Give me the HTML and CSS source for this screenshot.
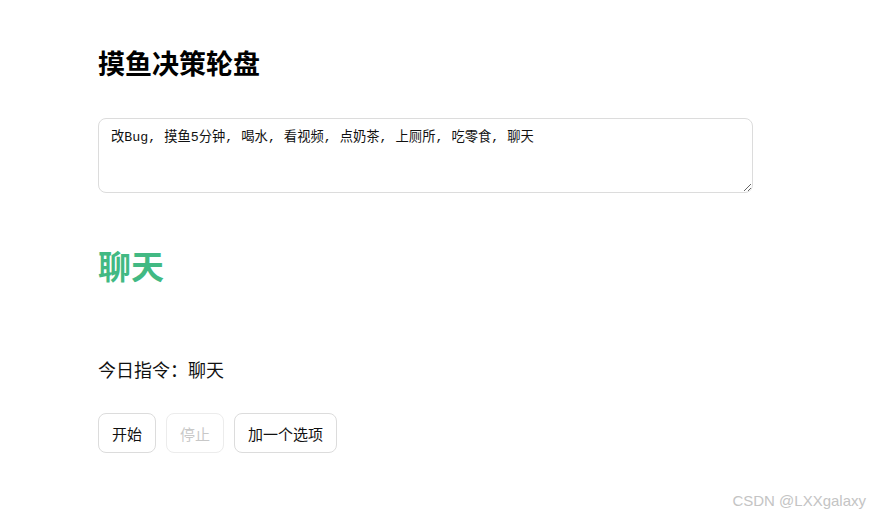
FILE: index.html
```html
<!DOCTYPE html>
<html lang="zh-CN">
<head>
<meta charset="utf-8">
<title>摸鱼决策轮盘</title>
<link rel="stylesheet" href="styles.css">
</head>
<body>
<main class="page">
  <h1 class="title">摸鱼决策轮盘</h1>
  <textarea class="options">改Bug, 摸鱼5分钟, 喝水, 看视频, 点奶茶, 上厕所, 吃零食, 聊天</textarea>
  <div class="result">聊天</div>
  <p class="order">今日指令：聊天</p>
  <div class="actions">
    <button class="btn">开始</button>
    <button class="btn" disabled>停止</button>
    <button class="btn">加一个选项</button>
  </div>
</main>
<div class="watermark">CSDN @LXXgalaxy</div>
</body>
</html>
```

FILE: styles.css
```css
html, body {
  margin: 0;
  padding: 0;
  background: #fff;
  height: 100%;
}
body {
  font-family: "Noto Sans CJK SC", "Noto Sans", sans-serif;
  color: #111;
  position: relative;
  overflow: hidden;
}
.page {
  width: 655px;
  padding: 46px 0 0 98px;
  display: flex;
  flex-direction: column;
}
.title {
  margin: 0;
  font-size: 27px;
  line-height: 33px;
  font-weight: 700;
  color: #000;
}
.options {
  margin-top: 39px;
  box-sizing: border-box;
  width: 655px;
  height: 75px;
  border: 1px solid #dcdcdc;
  border-radius: 8px;
  padding: 10px 12px;
  font-family: "Liberation Mono", "Noto Sans CJK SC", monospace;
  font-size: 13.3px;
  line-height: 18px;
  color: #111;
  resize: vertical;
  outline: none;
}
.result {
  margin-top: 52px;
  font-size: 33px;
  line-height: 40px;
  font-weight: 700;
  color: #42b983;
}
.order {
  margin: 72px 0 0;
  font-size: 18px;
  line-height: 24px;
  color: #111;
}
.actions {
  margin-top: 32px;
  display: flex;
  gap: 10px;
}
.btn {
  height: 40px;
  padding: 0 13px;
  border: 1px solid #dcdcdc;
  border-radius: 8px;
  background: #fff;
  font-family: "Noto Sans CJK SC", sans-serif;
  font-size: 15px;
  color: #111;
  cursor: pointer;
}
.btn:disabled {
  color: #c8c8c8;
  border-color: #ececec;
  cursor: not-allowed;
}
.watermark {
  position: absolute;
  right: 5px;
  bottom: 6px;
  font-family: "Liberation Sans", sans-serif;
  font-size: 15px;
  color: #c4c4c4;
}
```
